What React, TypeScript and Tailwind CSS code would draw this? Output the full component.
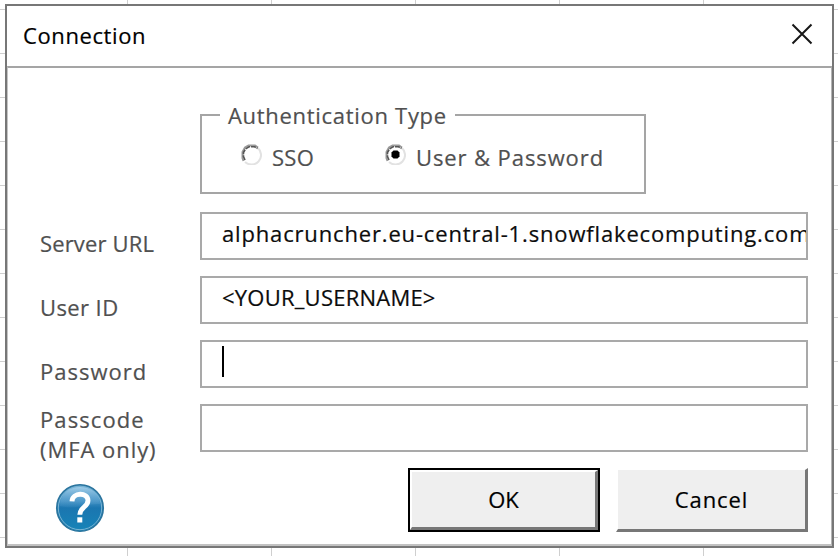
import React from "react";

type LabelProps = { children: React.ReactNode; className?: string };

function Label({ children, className = "" }: LabelProps) {
  return (
    <label className={`w-[160px] shrink-0 whitespace-nowrap text-[22px] leading-[30px] text-[#505050] ${className}`}>
      {children}
    </label>
  );
}

function Box({ children }: { children?: React.ReactNode }) {
  return (
    <div className="flex h-[48px] w-[608px] shrink-0 overflow-hidden whitespace-nowrap border-2 border-[#a9a9a9] bg-white pl-5 text-[22px] leading-[39px] text-[#0c0c0c]">
      {children}
    </div>
  );
}

function Radio({ checked = false }: { checked?: boolean }) {
  return (
    <svg width="22" height="22" viewBox="0 0 22 22" fill="none" className="mt-px shrink-0">
      <path d="M18 5A9.500 9.500 0 0 1 5 19" stroke="#e2e2e2" strokeWidth="2" />
      <path d="M3.500 18L2.500 15V9L5 4.500L8.500 2.500H15L18 4.500" stroke="#9a9a9a" strokeWidth="2" />
      <path d="M5 17L3.500 13.500V9.500L5.500 6L9 3.800H14.500L17.500 5.500" stroke="#555" strokeWidth="1.600" strokeDasharray="5 1" />
      {checked && <path d="M9.500 7.500h4l2 2v4l-2 2h-4l-2-2v-4z" fill="#000" />}
    </svg>
  );
}

function HelpIcon() {
  return (
    <svg width="50" height="50" viewBox="0 0 50 50">
      <defs>
        <linearGradient id="orb" x1="0" y1="0" x2="0" y2="1">
          <stop offset="0" stopColor="#5fa4d0" />
          <stop offset=".35" stopColor="#3f8fc3" />
          <stop offset=".5" stopColor="#1b76b0" />
          <stop offset="1" stopColor="#1684b8" />
        </linearGradient>
        <linearGradient id="gloss" x1="0" y1="0" x2="0" y2="1">
          <stop offset="0" stopColor="#b5d9ef" stopOpacity=".75" />
          <stop offset="1" stopColor="#5aa3d2" stopOpacity=".1" />
        </linearGradient>
      </defs>
      <circle cx="25" cy="25" r="23.300" fill="url(#orb)" stroke="#2b749d" strokeWidth="1.500" />
      <circle cx="25" cy="25" r="21.700" fill="none" stroke="#79b4d3" strokeWidth="1" />
      <path d="M5 23C5 11 14 4 25 4s20 7 20 17C33 20 22 27 5 23Z" fill="url(#gloss)" />
      <path d="M17 18.300C17.300 9.200 33 8.800 33 17.500C33 24 24.800 24.200 24.800 31.800" fill="none" stroke="#fff" strokeWidth="4.900" />
      <path d="M22.300 34.300h5v5.200h-5z" fill="#fff" />
    </svg>
  );
}

export default function App() {
  return (
    <div className="h-[556px] w-[838px] overflow-hidden bg-white bg-[linear-gradient(to_right,#cfcfcf_1.500px,transparent_1.500px),linear-gradient(to_bottom,#cfcfcf_1.500px,transparent_1.500px)] bg-[size:144px_44px] bg-[position:127px_9px] pl-[5px] pt-1 font-['Open_Sans','Noto_Sans',sans-serif] [-webkit-text-stroke:0.2px]">
      <div className="flex h-[544px] w-[829px] flex-col border-2 border-[#777] bg-white">
        <header className="flex h-[60px] shrink-0 items-start justify-between pl-4 pr-[19px]">
          <h1 className="pt-[14px] text-[22px] leading-[30px] tracking-[0.6px] text-black">Connection</h1>
          <svg width="22" height="22" viewBox="0 0 22 22" className="mt-[17px]">
            <path d="M1.500 1.500L20.500 20.500M20.500 1.500L1.500 20.500" stroke="#171717" strokeWidth="2" />
          </svg>
        </header>
        <main className="flex grow flex-col border-x border-b-2 border-t-2 border-t-[#a5a5a5] border-b-[#c2c2c2] border-l-[#c4c4c4] border-r-[#b4b4b4] pl-[32px]">
          <fieldset className="ml-[160px] mt-[32px] h-[94px] w-[446px] border-2 border-[#a5a5a5] px-[18px]">
            <legend className="whitespace-nowrap px-2 text-[22px] leading-[30px] tracking-[0.7px] text-[#505050]">Authentication Type</legend>
            <div className="mt-[12px] flex h-[30px] pl-[20px] text-[22px] leading-[30px] text-[#505050]">
              <label className="flex w-[144px]"><Radio /><span className="pl-[10px] tracking-[0.3px]">SSO</span></label>
              <label className="flex whitespace-nowrap"><Radio checked /><span className="pl-[10px] tracking-[0.9px]">User &amp; Password</span></label>
            </div>
          </fieldset>
          <form className="mt-[18px] flex flex-col gap-4">
            <div className="flex h-[48px]"><Label className="pt-4 tracking-[0.15px]">Server URL</Label><Box><span className="tracking-[0.84px]">alphacruncher.eu-central-1.snowflakecomputing.com</span></Box></div>
            <div className="flex h-[48px]"><Label className="pt-4 tracking-[0.4px]">User ID</Label><Box><span className="tracking-[0.23px]">&lt;YOUR_USERNAME&gt;</span></Box></div>
            <div className="flex h-[48px]"><Label className="pt-4 tracking-[1px]">Password</Label><Box><span className="mt-1 h-[31px] w-[2px] bg-black" /></Box></div>
            <div className="flex h-[48px]"><Label className="tracking-[1.1px]">Passcode<br /><span className="tracking-[0.95px]">(MFA only)</span></Label><Box /></div>
          </form>
          <div className="mt-[16px] flex">
            <div className="ml-[15px] mt-[15px] h-[50px] w-[50px]"><HelpIcon /></div>
            <button type="button" className="ml-[303px] h-[64px] w-[192px] border-2 border-black text-[22px] text-black">
              <span className="flex h-full w-full items-center justify-center border-2 border-b-[3px] border-r-[3px] border-t-white border-l-white border-b-[#777] border-r-[#777] bg-[#efefef]">OK</span>
            </button>
            <button type="button" className="ml-4 h-[64px] w-[192px] border-2 border-b-[3px] border-r-[3px] border-t-white border-l-white border-b-[#777] border-r-[#777] bg-[#efefef] text-[22px] text-black">
              <span className="flex h-full w-full items-center justify-center tracking-[0.9px]">Cancel</span>
            </button>
          </div>
        </main>
      </div>
    </div>
  );
}
